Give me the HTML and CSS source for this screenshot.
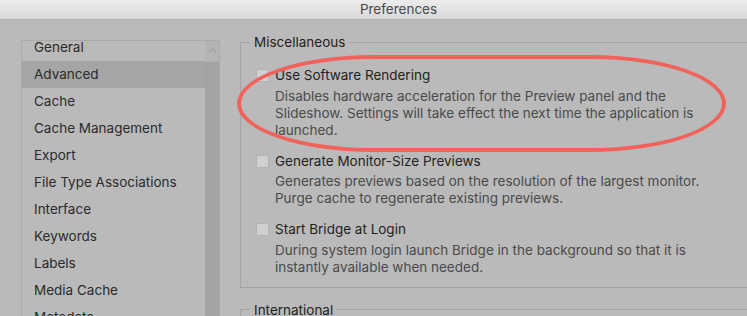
FILE: index.html
```html
<!DOCTYPE html>
<html lang="en">
<head>
    <meta charset="UTF-8">
    <title>Preferences</title>
    <link rel="stylesheet" href="styles.css">
</head>
<body>
    <div class="titlebar">Preferences</div>

    <div class="main">
        <!-- Category list -->
        <div class="sidebar">
            <ul class="cats">
                <li>General</li>
                <li class="selected">Advanced</li>
                <li>Cache</li>
                <li>Cache Management</li>
                <li>Export</li>
                <li>File Type Associations</li>
                <li>Interface</li>
                <li>Keywords</li>
                <li>Labels</li>
                <li>Media Cache</li>
                <li>Metadata</li>
            </ul>
            <div class="scrollbar">
                <div class="scroll-up">
                    <svg width="9" height="6" viewBox="0 0 9 6"><path d="M1 5 L4.5 1.5 L8 5" fill="none" stroke="#8f8f8f" stroke-width="1"/></svg>
                </div>
                <div class="scroll-thumb"></div>
            </div>
        </div>

        <!-- Settings -->
        <div class="content">
            <fieldset class="group">
                <legend>Miscellaneous</legend>

                <div class="option">
                    <span class="check"></span>
                    <div class="option-text">
                        <div class="option-label">Use Software Rendering</div>
                        <p class="option-desc">Disables hardware acceleration for the Preview panel and the Slideshow. Settings will take effect the next time the application is launched.</p>
                    </div>
                </div>

                <div class="option">
                    <span class="check"></span>
                    <div class="option-text">
                        <div class="option-label">Generate Monitor-Size Previews</div>
                        <p class="option-desc">Generates previews based on the resolution of the largest monitor.<br>Purge cache to regenerate existing previews.</p>
                    </div>
                </div>

                <div class="option">
                    <span class="check"></span>
                    <div class="option-text">
                        <div class="option-label">Start Bridge at Login</div>
                        <p class="option-desc">During system login launch Bridge in the background so that it is instantly available when needed.</p>
                    </div>
                </div>
            </fieldset>

            <fieldset class="group">
                <legend>International</legend>
            </fieldset>
        </div>
    </div>

    <!-- Highlight drawn over the first option -->
    <div class="highlight"></div>
</body>
</html>
```

FILE: styles.css
```css
/* Base */
body {
    margin: 0;
    width: 747px;
    height: 316px;
    overflow: hidden;
    background-color: #bababa;
    font-family: "Inter", "Liberation Sans", sans-serif;
    font-size: 13.5px;
    color: #1f1f1f;
    position: relative;
}

/* Window title bar */
.titlebar {
    height: 19px;
    line-height: 19px;
    text-align: center;
    font-size: 13.5px;
    color: #4a4a4a;
    background: linear-gradient(#ececec, #d8d8d8);
    border-bottom: 1px solid #b2b2b2;
    padding-left: 50px;
}

/* Two columns */
.main {
    display: flex;
    gap: 20px;
    padding: 20px 0 0 21px;
}

/* Category list */
.sidebar {
    width: 197px;
    height: 300px;
    flex-shrink: 0;
    display: flex;
    border: 1px solid #a9a9a9;
    overflow: hidden;
}

.cats {
    list-style: none;
    margin: -7px 0 0 0;
    padding: 0;
    flex: 1;
}

.cats li {
    height: 27px;
    line-height: 27px;
    padding-left: 12px;
    color: #2b2b2b;
    white-space: nowrap;
}

.cats li.selected {
    background-color: #a5a5a5;
}

.scrollbar {
    width: 14px;
    display: flex;
    flex-direction: column;
}

.scroll-up {
    height: 21px;
    display: flex;
    justify-content: center;
    padding-top: 6px;
    box-sizing: border-box;
    background-color: #b4b4b4;
}

.scroll-thumb {
    flex: 1;
    background-color: #a3a3a3;
}

/* Settings column */
.content {
    flex: 1;
    margin-top: -6px;
    margin-right: -30px;
}

.group {
    margin: 0 0 14px 0;
    padding: 0 0 11px 15px;
    border: 1px solid #a4a4a4;
}

.group legend {
    margin-left: -6px;
    padding: 0 4px;
    line-height: 16px;
    color: #1f1f1f;
}

.option {
    display: flex;
    gap: 6px;
    margin-top: 13px;
}

.option:first-of-type {
    margin-top: 16px;
}

.check {
    width: 11px;
    height: 11px;
    margin-top: 3px;
    flex-shrink: 0;
    background-color: #d0d0d0;
    border: 1px solid #b3b3b3;
    border-radius: 2px;
}

.option-label {
    line-height: 18px;
}

.option-desc {
    margin: 3.5px 0 0 0;
    width: 450px;
    line-height: 17px;
    color: #4a4a4a;
}

/* Red marker ellipse */
.highlight {
    position: absolute;
    left: 237px;
    top: 55px;
    width: 481px;
    height: 89px;
    border: 4px solid #f2625a;
    border-radius: 140px / 50px;
}
```
